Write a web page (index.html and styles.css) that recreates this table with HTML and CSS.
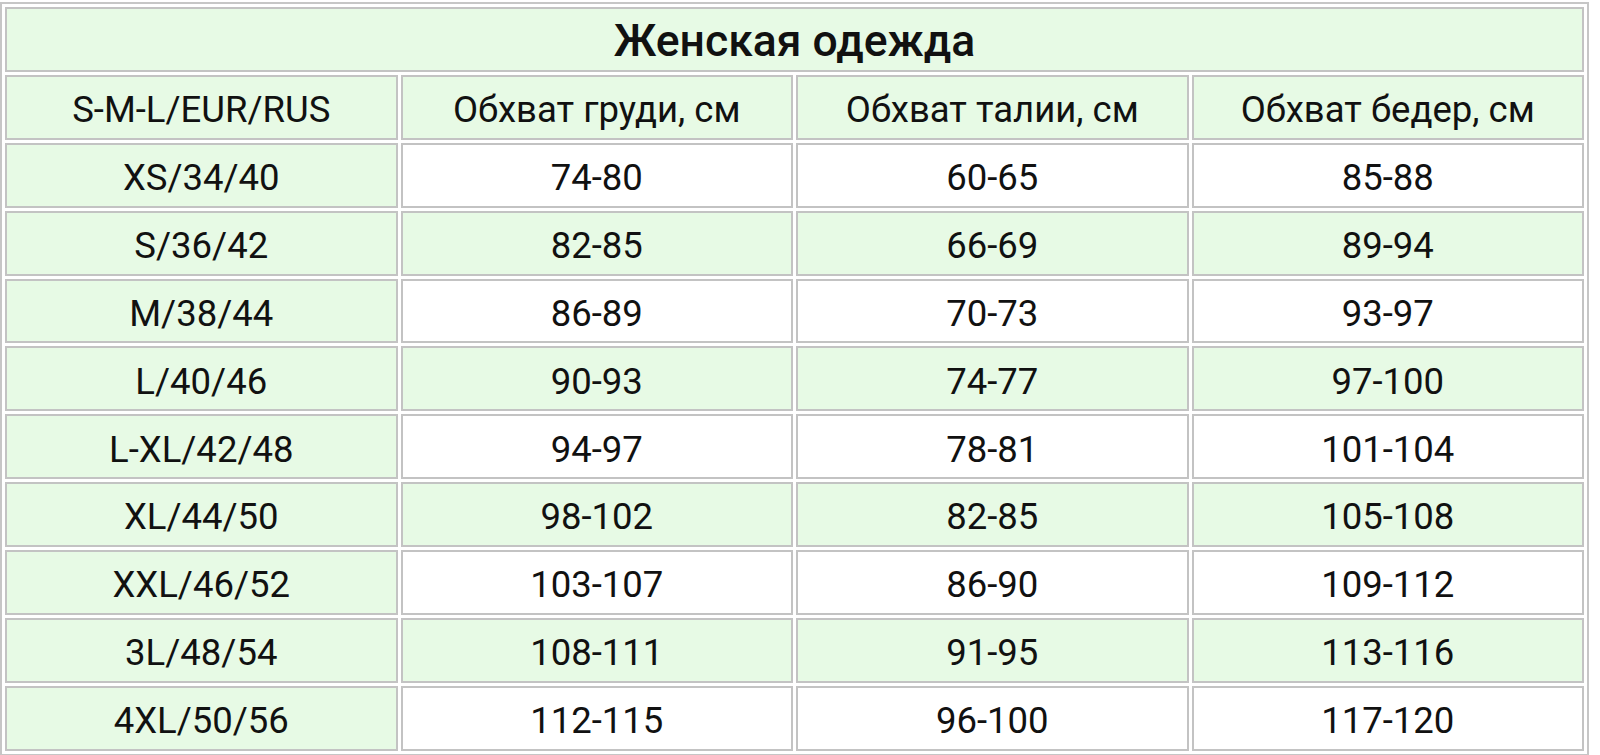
FILE: index.html
```html
<!DOCTYPE html>
<html lang="ru">
<head>
<meta charset="utf-8">
<title>Женская одежда</title>
<link rel="stylesheet" href="styles.css">
</head>
<body>
<div class="wrap">
<table class="sizes">
  <tbody>
    <tr><td class="title g" colspan="4">Женская одежда</td></tr>
    <tr class="g"><td>S-M-L/EUR/RUS</td><td>Обхват груди, см</td><td>Обхват талии, см</td><td>Обхват бедер, см</td></tr>
    <tr class="w"><td class="g">XS/34/40</td><td>74-80</td><td>60-65</td><td>85-88</td></tr>
    <tr class="g"><td>S/36/42</td><td>82-85</td><td>66-69</td><td>89-94</td></tr>
    <tr class="w"><td class="g">M/38/44</td><td>86-89</td><td>70-73</td><td>93-97</td></tr>
    <tr class="g"><td>L/40/46</td><td>90-93</td><td>74-77</td><td>97-100</td></tr>
    <tr class="w"><td class="g">L-XL/42/48</td><td>94-97</td><td>78-81</td><td>101-104</td></tr>
    <tr class="g"><td>XL/44/50</td><td>98-102</td><td>82-85</td><td>105-108</td></tr>
    <tr class="w"><td class="g">XXL/46/52</td><td>103-107</td><td>86-90</td><td>109-112</td></tr>
    <tr class="g"><td>3L/48/54</td><td>108-111</td><td>91-95</td><td>113-116</td></tr>
    <tr class="w"><td class="g">4XL/50/56</td><td>112-115</td><td>96-100</td><td>117-120</td></tr>
  </tbody>
</table>
</div>
</body>
</html>
```

FILE: styles.css
```css
html, body {
  margin: 0;
  padding: 0;
  background: #ffffff;
}
.wrap {
  padding-top: 2px;
}
.sizes {
  width: 1589px;
  table-layout: fixed;
  border-collapse: separate;
  border-spacing: 3px;
  border: 2px solid #c6c6c6;
  font-family: Roboto, "Liberation Sans", sans-serif;
  font-size: 36.5px;
  color: #111111;
}
.sizes td {
  border: 2px solid #c3c3c3;
  height: 54.9px;
  padding: 6px 0 0 0;
  text-align: center;
  vertical-align: middle;
  background: #ffffff;
  line-height: 1;
}
.sizes tr.g td,
.sizes td.g {
  background: #e7fae5;
}
.sizes td.title {
  font-weight: 500;
  font-size: 44.5px;
  padding-top: 4px;
  height: 56.9px;
}
```
